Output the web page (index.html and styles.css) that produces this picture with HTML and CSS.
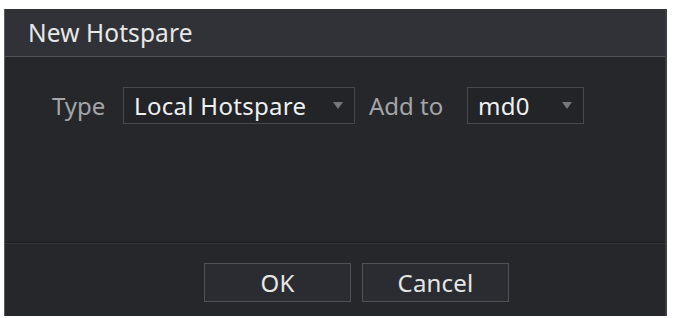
FILE: index.html
```html
<!DOCTYPE html>
<html>
<head>
<meta charset="utf-8">
<link rel="stylesheet" href="styles.css">
</head>
<body>
<div class="dialog">
  <div class="titlebar"><span class="title">New Hotspare</span></div>
  <div class="content">
    <div class="row">
      <span class="label label-type">Type</span>
      <div class="select sel-type"><span class="value">Local Hotspare</span><span class="arrow"></span></div>
      <span class="label label-add">Add to</span>
      <div class="select sel-add"><span class="value">md0</span><span class="arrow"></span></div>
    </div>
  </div>
  <div class="footer">
    <button class="btn">OK</button>
    <button class="btn">Cancel</button>
  </div>
</div>
</body>
</html>
```

FILE: styles.css
```css
html, body {
  margin: 0;
  padding: 0;
  background: #ffffff;
  font-family: "Noto Sans", "Open Sans", sans-serif;
}
.dialog {
  margin: 9px 0 0 4px;
  width: 663px;
  height: 307px;
  display: flex;
  flex-direction: column;
  background: #25272b;
  border-left: 1px solid #5a5c60;
  border-right: 2px solid #3c3e43;
  box-sizing: border-box;
}
.titlebar {
  height: 48px;
  background: #303237;
  border-bottom: 1px solid #505257;
  display: flex;
  align-items: center;
  padding-left: 23px;
  box-sizing: border-box;
}
.title {
  color: #e8e8e8;
  font-size: 24.5px;
  letter-spacing: 0.1px;
}
.content {
  flex: 1;
  padding-top: 30px;
  padding-left: 47px;
  border-bottom: 1px solid #1b1c1f;
}
.row {
  display: flex;
  align-items: center;
  height: 37px;
}
.label {
  color: #a4a5a8;
  font-size: 24px;
  white-space: nowrap;
}
.label-type {
  width: 71px;
}
.label-add {
  width: 98px;
  margin-left: 14px;
}
.select {
  height: 37px;
  box-sizing: border-box;
  border: 1px solid #46494e;
  background: #222428;
  display: flex;
  align-items: center;
  padding-left: 10px;
  padding-right: 11px;
}
.sel-type { width: 232px; }
.sel-add { width: 117px; }
.value {
  color: #f0f0f0;
  font-size: 24px;
  letter-spacing: 0.3px;
  flex: 1;
  white-space: nowrap;
}
.arrow {
  width: 0;
  height: 0;
  border-left: 5px solid transparent;
  border-right: 5px solid transparent;
  border-top: 7px solid #75777c;
}
.footer {
  height: 73px;
  display: flex;
  justify-content: flex-start;
  align-items: flex-start;
  padding-top: 19px;
  padding-left: 199px;
  gap: 11px;
  box-sizing: border-box;
  border-top: 1px solid #36383d;
}
.btn {
  width: 147px;
  height: 39px;
  background: #2a2c31;
  border: 1px solid #505257;
  color: #e6e6e6;
  font-family: "Noto Sans", "Open Sans", sans-serif;
  font-size: 24px;
  letter-spacing: 0.2px;
  padding: 0;
}
```
